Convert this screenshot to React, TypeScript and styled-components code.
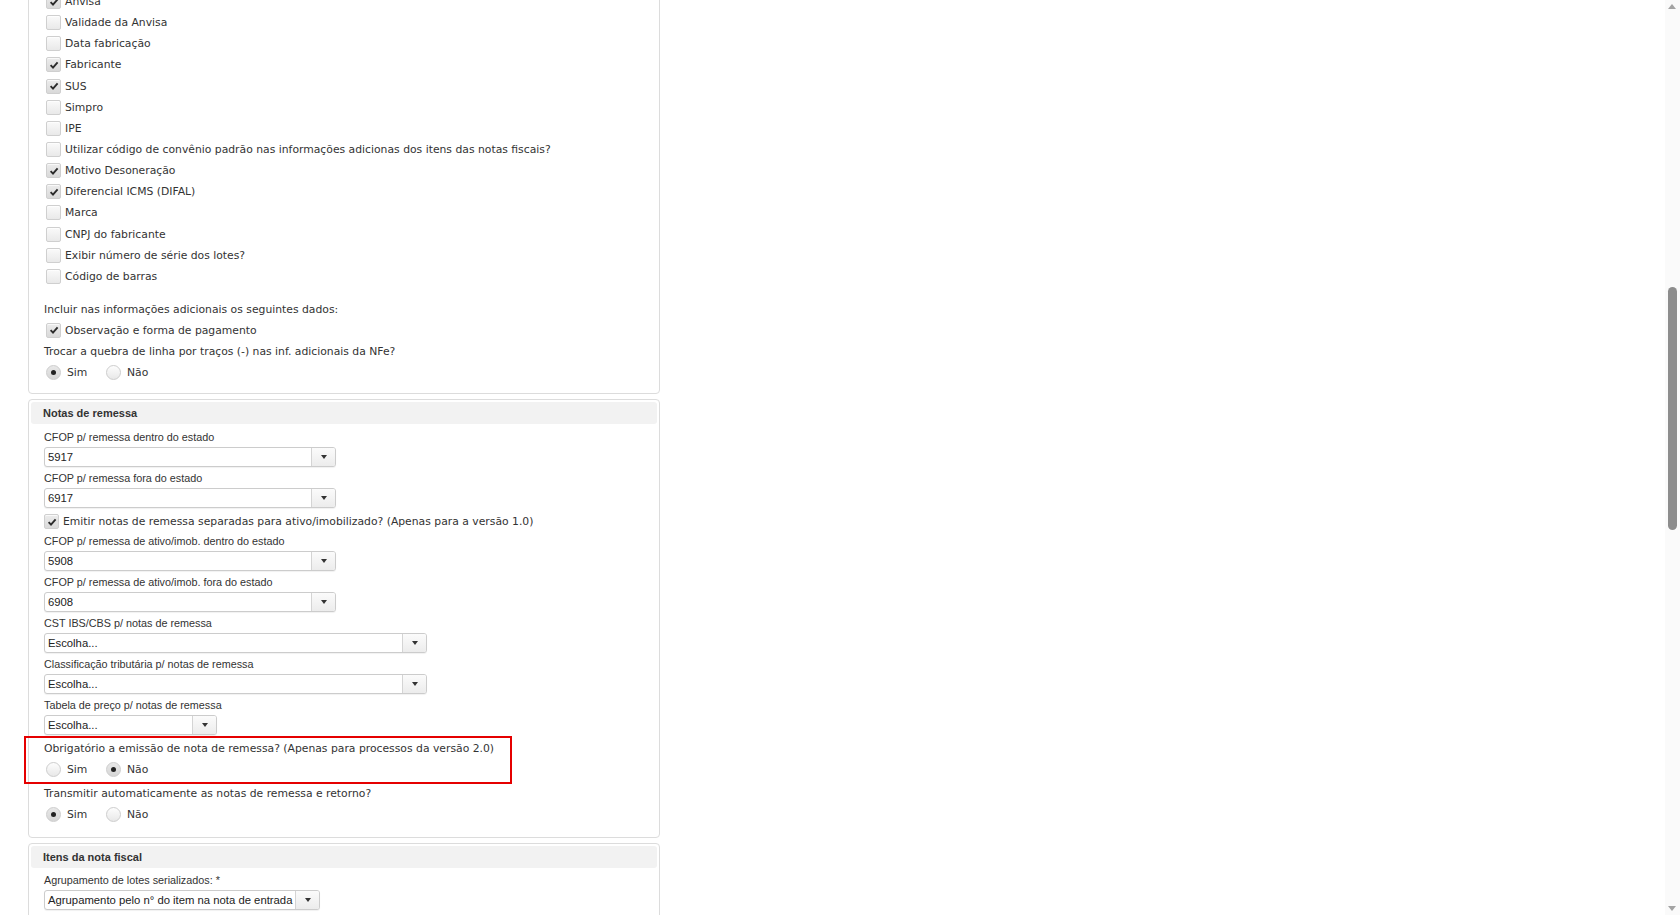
import React from 'react'
import styled, { createGlobalStyle } from 'styled-components'

const GlobalStyle = createGlobalStyle`
  html, body {
    margin: 0;
    padding: 0;
    background: #fff;
    overflow: hidden;
  }
  body {
    font-family: "DejaVu Sans", Verdana, sans-serif;
    color: #333;
  }
`

const Page = styled.div`
  width: 1665px;
  height: 915px;
  overflow: hidden;
  padding-left: 28px;
  box-sizing: border-box;
`

const Column = styled.div`
  width: 632px;
  display: flex;
  flex-direction: column;
  gap: 5px;
  margin-top: -18px;
`

const Panel = styled.section<{ $padBottom: number }>`
  border: 1px solid #dcdcdc;
  border-radius: 4px;
  background: #fff;
  padding: 2px 2px ${p => p.$padBottom}px;
`

const PanelHeader = styled.div`
  height: 22px;
  display: flex;
  align-items: center;
  padding-left: 12px;
  background: #f2f2f2;
  border-radius: 3px;
  font-family: "Liberation Sans", Arial, sans-serif;
  font-weight: bold;
  font-size: 11px;
  color: #333;
`

const PanelBody = styled.div<{ $top: number }>`
  padding: ${p => p.$top}px 13px 0;
  display: flex;
  flex-direction: column;
`

const CheckRow = styled.label<{ $flush?: boolean; $h?: number }>`
  height: ${p => p.$h ?? 21.15}px;
  display: flex;
  align-items: center;
  gap: 4px;
  padding-left: ${p => (p.$flush ? 0 : 2)}px;
  font-size: 10.8px;
  white-space: nowrap;
`

const Box = styled.span<{ $checked: boolean }>`
  width: 15px;
  height: 15px;
  box-sizing: border-box;
  border: 1px solid #cfcfcf;
  border-radius: 2px;
  background: ${p =>
    p.$checked
      ? 'linear-gradient(#ececec, #d9d9d9)'
      : 'linear-gradient(#fafafa, #e9e9e9)'};
  box-shadow: inset 0 1px 0 rgba(255, 255, 255, 0.7);
  display: flex;
  align-items: center;
  justify-content: center;
  flex: none;
`

const Line = styled.div<{ $top?: number; $h?: number }>`
  height: ${p => p.$h ?? 21}px;
  margin-top: ${p => p.$top ?? 0}px;
  display: flex;
  align-items: center;
  font-size: 10.8px;
  white-space: nowrap;
`

const RadioRow = styled.div`
  height: 22px;
  display: flex;
  align-items: center;
  padding-left: 2px;
  font-size: 10.8px;
`

const RadioItem = styled.label`
  display: flex;
  align-items: center;
  gap: 6px;
  width: 60px;
`

const Circle = styled.span<{ $checked: boolean }>`
  width: 15px;
  height: 15px;
  box-sizing: border-box;
  border-radius: 50%;
  border: 1px solid #cdcdcd;
  background: ${p =>
    p.$checked
      ? 'linear-gradient(#e8e8e8, #d6d6d6)'
      : 'linear-gradient(#fdfdfd, #e8e8e8)'};
  display: flex;
  align-items: center;
  justify-content: center;
  flex: none;

  &::after {
    content: '';
    width: 5px;
    height: 5px;
    border-radius: 50%;
    background: #222;
    display: ${p => (p.$checked ? 'block' : 'none')};
  }
`

const Field = styled.div`
  display: flex;
  flex-direction: column;
  margin-bottom: 3px;
`

const FieldLabel = styled.div`
  height: 16px;
  line-height: 16px;
  margin-bottom: 2px;
  font-family: "Liberation Sans", Arial, sans-serif;
  font-size: 10.8px;
  color: #333;
  white-space: nowrap;
`

const SelectBox = styled.div<{ $w: number }>`
  width: ${p => p.$w}px;
  height: 20px;
  box-sizing: border-box;
  border: 1px solid #cccccc;
  border-radius: 3px;
  background: #fff;
  box-shadow: 0 1px 1px rgba(0, 0, 0, 0.06);
  display: flex;
  font-family: "Liberation Sans", Arial, sans-serif;
  font-size: 11.3px;
  color: #222;
  overflow: hidden;
`

const SelectValue = styled.div`
  flex: 1;
  display: flex;
  align-items: center;
  padding-left: 3px;
  white-space: nowrap;
  overflow: hidden;
`

const SelectButton = styled.div`
  width: 23px;
  flex: none;
  border-left: 1px solid #d4d4d4;
  background: linear-gradient(#fbfbfb, #ececec);
  display: flex;
  align-items: center;
  justify-content: center;

  &::after {
    content: '';
    border-left: 3.5px solid transparent;
    border-right: 3.5px solid transparent;
    border-top: 4px solid #333;
  }
`

const Highlighted = styled.div`
  position: relative;

  &::after {
    content: '';
    position: absolute;
    top: -2px;
    left: -20px;
    width: 488px;
    height: 48px;
    box-sizing: border-box;
    border: 2px solid #e50000;
    pointer-events: none;
  }
`

const Scrollbar = styled.div`
  position: fixed;
  top: 0;
  right: 0;
  width: 15px;
  height: 915px;
  background: #fafafa;
`

const Arrow = styled.span<{ $down?: boolean }>`
  position: absolute;
  left: 3px;
  ${p => (p.$down ? 'bottom: 4px;' : 'top: 4px;')}
  border-left: 4.5px solid transparent;
  border-right: 4.5px solid transparent;
  ${p => (p.$down ? 'border-top' : 'border-bottom')}: 5px solid #a3a3a3;
`

const Thumb = styled.div`
  position: absolute;
  left: 3px;
  top: 287px;
  width: 9px;
  height: 243px;
  border-radius: 5px;
  background: #8d8d8d;
`

const Check = () => (
  <svg width="10" height="10" viewBox="0 0 10 10">
    <path d="M1.6 5.2 L4 7.6 L8.6 2.4" fill="none" stroke="#2b2b2b" strokeWidth="1.9" />
  </svg>
)

const Checkbox = ({ checked, label, flush, h }: { checked: boolean; label: string; flush?: boolean; h?: number }) => (
  <CheckRow $flush={flush} $h={h}>
    <Box $checked={checked}>{checked && <Check />}</Box>
    {label}
  </CheckRow>
)

const YesNo = ({ yes }: { yes: boolean }) => (
  <RadioRow>
    <RadioItem>
      <Circle $checked={yes} />
      Sim
    </RadioItem>
    <RadioItem>
      <Circle $checked={!yes} />
      Não
    </RadioItem>
  </RadioRow>
)

const Select = ({ label, value, w }: { label: string; value: string; w: number }) => (
  <Field>
    <FieldLabel>{label}</FieldLabel>
    <SelectBox $w={w}>
      <SelectValue>{value}</SelectValue>
      <SelectButton />
    </SelectBox>
  </Field>
)

const infoOptions: [string, boolean][] = [
  ['Anvisa', true],
  ['Validade da Anvisa', false],
  ['Data fabricação', false],
  ['Fabricante', true],
  ['SUS', true],
  ['Simpro', false],
  ['IPE', false],
  ['Utilizar código de convênio padrão nas informações adicionas dos itens das notas fiscais?', false],
  ['Motivo Desoneração', true],
  ['Diferencial ICMS (DIFAL)', true],
  ['Marca', false],
  ['CNPJ do fabricante', false],
  ['Exibir número de série dos lotes?', false],
  ['Código de barras', false],
]

export default function App() {
  return (
    <>
      <GlobalStyle />
      <Page>
        <Column>
          <Panel $padBottom={9}>
            <PanelBody $top={6}>
              {infoOptions.map(([label, checked]) => (
                <Checkbox key={label} label={label} checked={checked} />
              ))}
              <Line $top={12}>Incluir nas informações adicionais os seguintes dados:</Line>
              <Checkbox label="Observação e forma de pagamento" checked h={21} />
              <Line>Trocar a quebra de linha por traços (-) nas inf. adicionais da NFe?</Line>
              <YesNo yes />
            </PanelBody>
          </Panel>

          <Panel $padBottom={11}>
            <PanelHeader>Notas de remessa</PanelHeader>
            <PanelBody $top={5}>
              <Select label="CFOP p/ remessa dentro do estado" value="5917" w={292} />
              <Select label="CFOP p/ remessa fora do estado" value="6917" w={292} />
              <Checkbox
                flush
                checked
                h={22}
                label="Emitir notas de remessa separadas para ativo/imobilizado? (Apenas para a versão 1.0)"
              />
              <Select label="CFOP p/ remessa de ativo/imob. dentro do estado" value="5908" w={292} />
              <Select label="CFOP p/ remessa de ativo/imob. fora do estado" value="6908" w={292} />
              <Select label="CST IBS/CBS p/ notas de remessa" value="Escolha..." w={383} />
              <Select label="Classificação tributária p/ notas de remessa" value="Escolha..." w={383} />
              <Select label="Tabela de preço p/ notas de remessa" value="Escolha..." w={173} />
              <Highlighted>
                <Line>Obrigatório a emissão de nota de remessa? (Apenas para processos da versão 2.0)</Line>
                <YesNo yes={false} />
              </Highlighted>
              <Line $top={2}>Transmitir automaticamente as notas de remessa e retorno?</Line>
              <YesNo yes />
            </PanelBody>
          </Panel>

          <Panel $padBottom={8}>
            <PanelHeader>Itens da nota fiscal</PanelHeader>
            <PanelBody $top={4}>
              <Select
                label="Agrupamento de lotes serializados: *"
                value="Agrupamento pelo n° do item na nota de entrada"
                w={276}
              />
            </PanelBody>
          </Panel>
        </Column>
      </Page>
      <Scrollbar>
        <Arrow />
        <Thumb />
        <Arrow $down />
      </Scrollbar>
    </>
  )
}
